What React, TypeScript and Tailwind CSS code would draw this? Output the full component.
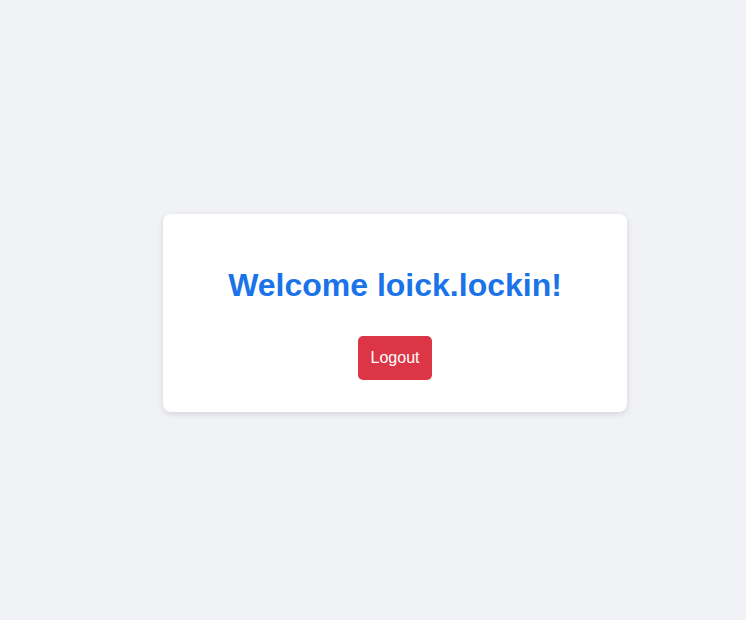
export default function App() {
  return (
    <div
      className="flex h-[620px] w-full items-center justify-center bg-[#f0f2f5]"
      style={{ fontFamily: '"Liberation Sans", Arial, sans-serif' }}
    >
      <div className="ml-[44px] mt-[6px] flex w-[464px] flex-col items-center rounded-lg bg-white p-8 shadow-[0_2px_6px_rgba(0,0,0,0.12)]">
        <h1 className="mt-[20.5px] mb-[22.4px] text-[32px] font-bold leading-[36.8px] text-[#1a73e8]">
          Welcome loick.lockin!
        </h1>
        <button className="mt-[10px] rounded-[5px] bg-[#dc3545] px-[13px] py-3 text-base leading-5 text-white">
          Logout
        </button>
      </div>
    </div>
  );
}
